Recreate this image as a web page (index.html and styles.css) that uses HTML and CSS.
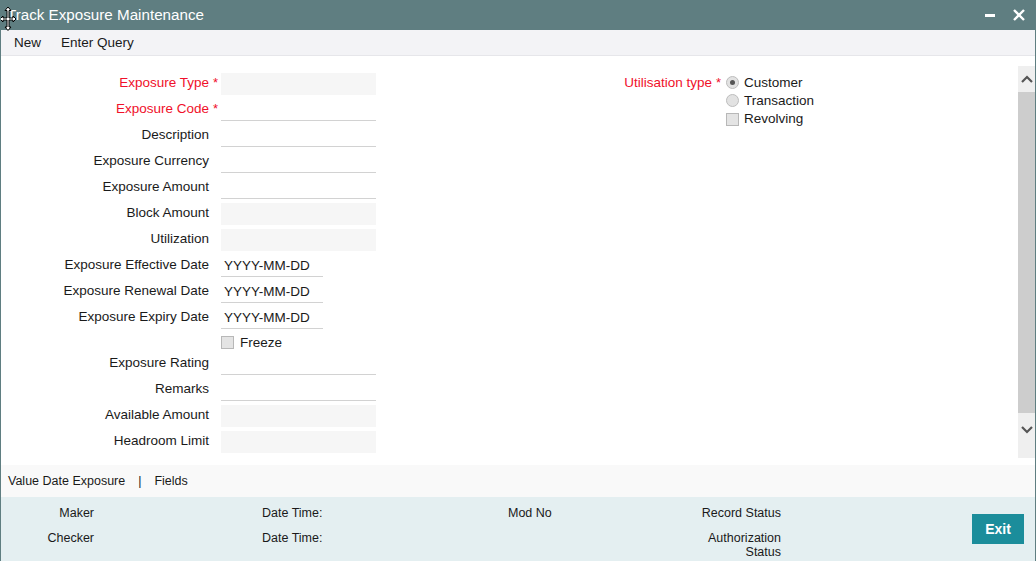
FILE: index.html
```html
<!DOCTYPE html>
<html>
<head>
<meta charset="utf-8">
<title>Track Exposure Maintenance</title>
<link rel="stylesheet" href="styles.css">
</head>
<body>
<div class="window">
  <div class="titlebar">
    <span class="title">Track Exposure Maintenance</span>
    <div class="winbtns">
      <svg class="wbtn" width="12" height="12" viewBox="0 0 12 12"><rect x="1" y="5" width="10" height="3" fill="#fff"/></svg>
      <svg class="wbtn" width="14" height="14" viewBox="0 0 14 14"><path d="M2 2 L12 12 M12 2 L2 12" stroke="#fff" stroke-width="2.4"/></svg>
    </div>
    <svg class="cursor" width="16" height="26" viewBox="0 0 16 26">
      <path d="M8 1 L11 4.5 L9 4.5 L9 12 L13 12 L13 10 L16 13 L13 16 L13 14 L9 14 L9 21 L11 21 L8 24.5 L5 21 L7 21 L7 14 L3 14 L3 16 L0 13 L3 10 L3 12 L7 12 L7 4.5 L5 4.5 Z" fill="#fff" stroke="#000" stroke-width="1"/>
    </svg>
  </div>
  <div class="toolbar">
    <span class="tool">New</span>
    <span class="tool">Enter Query</span>
  </div>
  <div class="main">
    <div class="content">
      <div class="form-left">
        <div class="row"><label class="req">Exposure Type</label><span class="star">*</span><span class="input disabled"></span></div>
        <div class="row"><label class="req">Exposure Code</label><span class="star">*</span><span class="input"></span></div>
        <div class="row"><label>Description</label><span></span><span class="input"></span></div>
        <div class="row"><label>Exposure Currency</label><span></span><span class="input"></span></div>
        <div class="row"><label>Exposure Amount</label><span></span><span class="input"></span></div>
        <div class="row"><label>Block Amount</label><span></span><span class="input disabled"></span></div>
        <div class="row"><label>Utilization</label><span></span><span class="input disabled"></span></div>
        <div class="row"><label>Exposure Effective Date</label><span></span><span class="input date">YYYY-MM-DD</span></div>
        <div class="row"><label>Exposure Renewal Date</label><span></span><span class="input date">YYYY-MM-DD</span></div>
        <div class="row"><label>Exposure Expiry Date</label><span></span><span class="input date">YYYY-MM-DD</span></div>
        <div class="row short"><label></label><span></span><span class="check"><span class="box"></span>Freeze</span></div>
        <div class="row"><label>Exposure Rating</label><span></span><span class="input"></span></div>
        <div class="row"><label>Remarks</label><span></span><span class="input"></span></div>
        <div class="row"><label>Available Amount</label><span></span><span class="input disabled"></span></div>
        <div class="row"><label>Headroom Limit</label><span></span><span class="input disabled"></span></div>
      </div>
      <div class="form-right">
        <div class="rrow"><label class="req">Utilisation type</label><span class="star">*</span><span class="opt"><span class="radio on"></span>Customer</span></div>
        <div class="rrow"><label></label><span></span><span class="opt"><span class="radio"></span>Transaction</span></div>
        <div class="rrow"><label></label><span></span><span class="opt"><span class="box"></span>Revolving</span></div>
      </div>
    </div>
    <div class="scrollbar">
      <div class="sb-up"><svg width="14" height="10" viewBox="0 0 14 10"><path d="M2 8 L7 3 L12 8" fill="none" stroke="#555" stroke-width="2.2"/></svg></div>
      <div class="sb-thumb"></div>
      <div class="sb-down"><svg width="14" height="10" viewBox="0 0 14 10"><path d="M2 2 L7 7 L12 2" fill="none" stroke="#555" stroke-width="2.2"/></svg></div>
    </div>
  </div>
  <div class="tabs">
    <span>Value Date Exposure</span><span class="sep">|</span><span>Fields</span>
  </div>
  <div class="footer">
    <span class="f-lbl">Maker</span><span></span><span>Date Time:</span><span>Mod No</span><span class="f-lbl">Record Status</span><span></span>
    <button class="exit">Exit</button>
    <span class="f-lbl">Checker</span><span></span><span>Date Time:</span><span></span><span class="f-lbl">Authorization Status</span><span></span>
  </div>
</div>
</body>
</html>
```
FILE: styles.css
```css
* { box-sizing: border-box; }
html, body { margin: 0; padding: 0; }
body {
  font-family: "Liberation Sans", Arial, sans-serif;
  font-size: 13.5px;
  color: #1a1a1a;
  background: #fff;
}
.window {
  width: 1036px;
  height: 561px;
  display: flex;
  flex-direction: column;
  border-left: 1px solid #5f7e81;
  border-right: 1px solid #5f7e81;
  overflow: hidden;
}
.titlebar {
  position: relative;
  height: 30px;
  flex: none;
  background: #5f7e81;
  color: #fff;
  display: flex;
  align-items: center;
  justify-content: space-between;
  padding: 0 10px 0 7px;
  margin: 0 -1px;
}
.title { font-size: 15.2px; position: relative; top: -1px; }
.winbtns { display: flex; align-items: center; gap: 16px; }
.cursor { position: absolute; left: 0; top: 6px; }
.toolbar {
  height: 26px;
  flex: none;
  background: #f3f3f6;
  display: flex;
  align-items: center;
  gap: 20px;
  padding-left: 13px;
  border-bottom: 1px solid #e6e6ea;
}
.main {
  height: 409px;
  flex: none;
  display: flex;
}
.content {
  flex: 1;
  display: flex;
  padding-top: 13px;
}
.form-left {
  width: 400px;
  display: flex;
  flex-direction: column;
}
.row {
  display: grid;
  grid-template-columns: 208px 12px 1fr;
  height: 26px;
  flex: none;
  align-items: end;
}
.row.short { height: 20px; align-items: center; padding-top: 6px; }
.row label {
  text-align: right;
  align-self: center;
  color: #1a1a1a;
  white-space: nowrap;
}
.row label.req, .rrow label.req, .star { color: #f0102a; }
.star { align-self: center; padding-left: 4px; font-size: 13px; }
.row .input {
  width: 155px;
  height: 23px;
  border-bottom: 1px solid #d2d2d2;
  background: #fff;
  display: flex;
  align-items: center;
  padding-left: 3px;
}
.row .input.disabled { background: #f6f6f6; border-bottom-color: #f6f6f6; height: 22px; }
.row .input.date { width: 102px; }
.check, .opt { display: flex; align-items: center; gap: 6px; }
.box {
  width: 13px;
  height: 13px;
  background: #e4e4e4;
  border: 1px solid #b8b8b8;
  display: inline-block;
}
.form-right {
  margin-left: 200px;
  margin-top: 4px;
  display: flex;
  flex-direction: column;
}
.rrow {
  display: grid;
  grid-template-columns: 111px 14px 1fr;
  height: 18px;
  flex: none;
  align-items: center;
  white-space: nowrap;
}
.rrow label { text-align: right; }
.rrow .star { padding-left: 4px; }
.rrow .opt { gap: 5px; }
.radio {
  width: 13px;
  height: 13px;
  border-radius: 50%;
  background: #e2e2e2;
  border: 1px solid #bdbdbd;
  display: inline-flex;
  align-items: center;
  justify-content: center;
}
.radio.on::after {
  content: "";
  width: 5px;
  height: 5px;
  border-radius: 50%;
  background: #555;
}
.rrow .box { margin-top: 2px; }
.scrollbar {
  width: 17px;
  flex: none;
  margin: 10px 0 7px;
  display: flex;
  flex-direction: column;
  background: #efefef;
}
.sb-up { height: 26px; flex: none; display: flex; align-items: center; justify-content: center; }
.sb-thumb { height: 321px; flex: none; background: #cdcdcd; }
.sb-down { flex: 1; display: flex; align-items: flex-start; justify-content: center; padding-top: 12px; }
.tabs {
  height: 32px;
  flex: none;
  background: #f9f9f9;
  display: flex;
  align-items: center;
  padding-left: 7px;
  font-size: 12.5px;
}
.tabs .sep { margin: 0 13px; }
.footer {
  height: 64px;
  flex: none;
  background: #e4eff1;
  display: grid;
  grid-template-columns: 93px 168px 246px 182px 91px 191px 52px;
  grid-template-rows: 14px auto;
  row-gap: 11px;
  padding-top: 9px;
  line-height: 14px;
  font-size: 12.5px;
  margin: 0 -1px;
  padding-left: 1px;
}
.f-lbl { text-align: right; }
.exit {
  grid-row: 1 / span 2;
  grid-column: 7;
  align-self: start;
  margin-top: 8px;
  height: 30px;
  width: 52px;
  border: none;
  background: #1b8d9b;
  color: #fff;
  font-family: "Liberation Sans", Arial, sans-serif;
  font-weight: bold;
  font-size: 14px;
  padding: 0;
}
```
